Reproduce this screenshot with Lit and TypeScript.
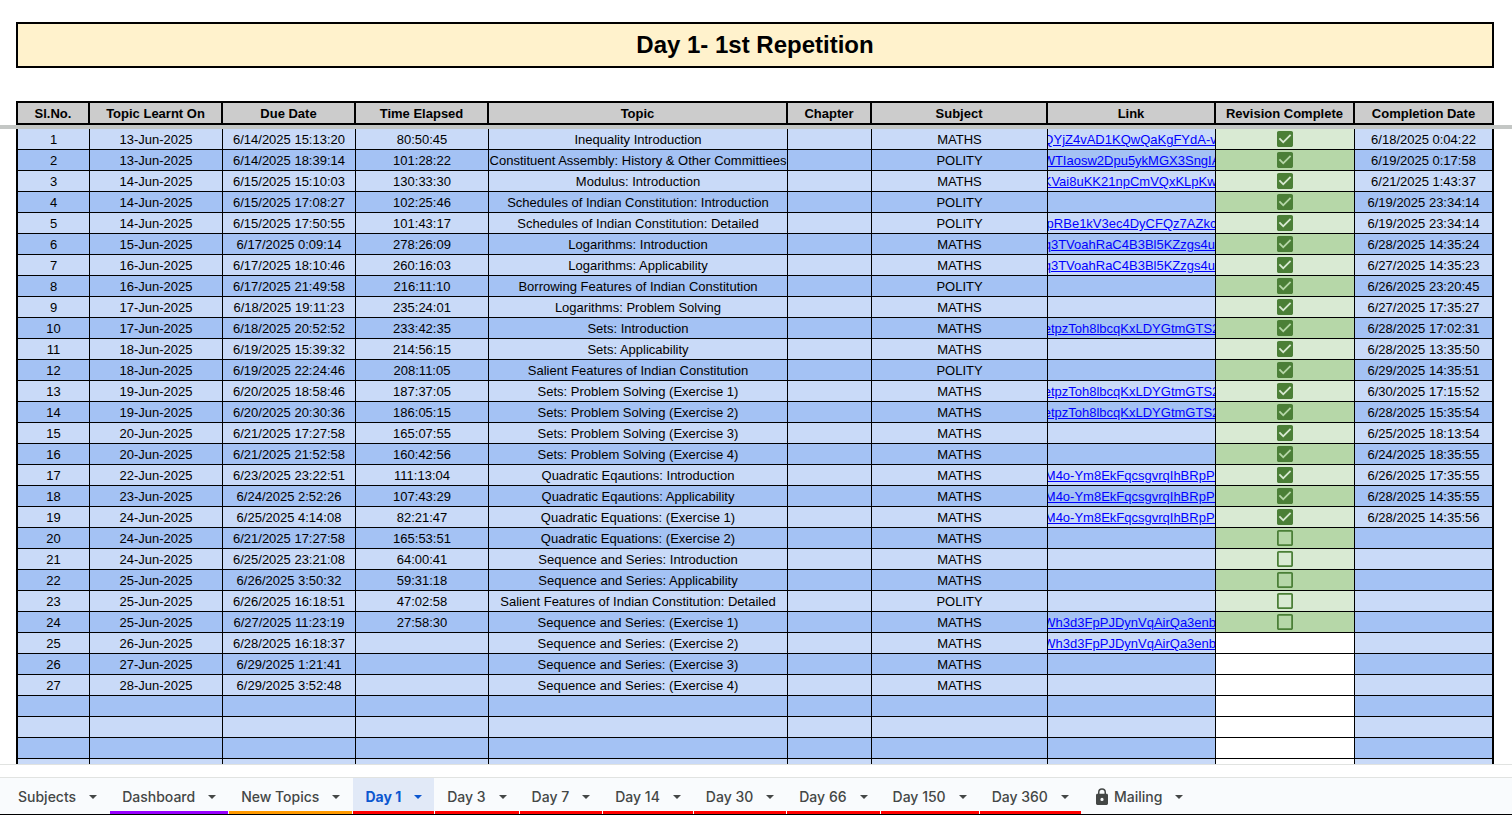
import { LitElement, html, css, nothing } from "lit";
import { customElement, state } from "lit/decorators.js";
import { classMap } from "lit/directives/class-map.js";

interface Row {
  learnt: string;
  due: string;
  elapsed: string;
  topic: string;
  subject: string;
  link: string;
  done: boolean | null;
  completed: string;
}

const COLUMNS: [string, number][] = [
  ["Sl.No.", 74],
  ["Topic Learnt On", 133],
  ["Due Date", 133],
  ["Time Elapsed", 133],
  ["Topic", 299],
  ["Chapter", 84],
  ["Subject", 176],
  ["Link", 168],
  ["Revision Complete", 139],
  ["Completion Date", 139],
];

const row = (
  learnt: string,
  due: string,
  elapsed: string,
  topic: string,
  subject: string,
  link: string,
  done: boolean | null,
  completed: string
): Row => ({ learnt: `${learnt}-Jun-2025`, due, elapsed, topic, subject, link, done, completed });

const LOG = "q3TVoahRaC4B3Bl5KZzgs4u-";
const SETS = "etpzToh8lbcqKxLDYGtmGTS2";
const QUAD = "M4o-Ym8EkFqcsgvrqIhBRpP\u00a0";
const SEQ = "Wh3d3FpPJDynVqAirQa3enbt";

const ROWS: Row[] = [
  row("13", "6/14/2025 15:13:20", "80:50:45", "Inequality Introduction", "MATHS", "QYjZ4vAD1KQwQaKgFYdA-vi", true, "6/18/2025 0:04:22"),
  row("13", "6/14/2025 18:39:14", "101:28:22", "Constituent Assembly: History & Other Committiees", "POLITY", "WTIaosw2Dpu5ykMGX3SngIA", true, "6/19/2025 0:17:58"),
  row("14", "6/15/2025 15:10:03", "130:33:30", "Modulus: Introduction", "MATHS", "KVai8uKK21npCmVQxKLpKw\u00a0", true, "6/21/2025 1:43:37"),
  row("14", "6/15/2025 17:08:27", "102:25:46", "Schedules of Indian Constitution: Introduction", "POLITY", "", true, "6/19/2025 23:34:14"),
  row("14", "6/15/2025 17:50:55", "101:43:17", "Schedules of Indian Constitution: Detailed", "POLITY", "pRBe1kV3ec4DyCFQz7AZkc", true, "6/19/2025 23:34:14"),
  row("15", "6/17/2025 0:09:14", "278:26:09", "Logarithms: Introduction", "MATHS", LOG, true, "6/28/2025 14:35:24"),
  row("16", "6/17/2025 18:10:46", "260:16:03", "Logarithms: Applicability", "MATHS", LOG, true, "6/27/2025 14:35:23"),
  row("16", "6/17/2025 21:49:58", "216:11:10", "Borrowing Features of Indian Constitution", "POLITY", "", true, "6/26/2025 23:20:45"),
  row("17", "6/18/2025 19:11:23", "235:24:01", "Logarithms: Problem Solving", "MATHS", "", true, "6/27/2025 17:35:27"),
  row("17", "6/18/2025 20:52:52", "233:42:35", "Sets: Introduction", "MATHS", SETS, true, "6/28/2025 17:02:31"),
  row("18", "6/19/2025 15:39:32", "214:56:15", "Sets: Applicability", "MATHS", "", true, "6/28/2025 13:35:50"),
  row("18", "6/19/2025 22:24:46", "208:11:05", "Salient Features of Indian Constitution", "POLITY", "", true, "6/29/2025 14:35:51"),
  row("19", "6/20/2025 18:58:46", "187:37:05", "Sets: Problem Solving (Exercise 1)", "MATHS", SETS, true, "6/30/2025 17:15:52"),
  row("19", "6/20/2025 20:30:36", "186:05:15", "Sets: Problem Solving (Exercise 2)", "MATHS", SETS, true, "6/28/2025 15:35:54"),
  row("20", "6/21/2025 17:27:58", "165:07:55", "Sets: Problem Solving (Exercise 3)", "MATHS", "", true, "6/25/2025 18:13:54"),
  row("20", "6/21/2025 21:52:58", "160:42:56", "Sets: Problem Solving (Exercise 4)", "MATHS", "", true, "6/24/2025 18:35:55"),
  row("22", "6/23/2025 23:22:51", "111:13:04", "Quadratic Eqautions: Introduction", "MATHS", QUAD, true, "6/26/2025 17:35:55"),
  row("23", "6/24/2025 2:52:26", "107:43:29", "Quadratic Eqautions: Applicability", "MATHS", QUAD, true, "6/28/2025 14:35:55"),
  row("24", "6/25/2025 4:14:08", "82:21:47", "Quadratic Equations: (Exercise 1)", "MATHS", QUAD, true, "6/28/2025 14:35:56"),
  row("24", "6/21/2025 17:27:58", "165:53:51", "Quadratic Equations: (Exercise 2)", "MATHS", "", false, ""),
  row("24", "6/25/2025 23:21:08", "64:00:41", "Sequence and Series: Introduction", "MATHS", "", false, ""),
  row("25", "6/26/2025 3:50:32", "59:31:18", "Sequence and Series: Applicability", "MATHS", "", false, ""),
  row("25", "6/26/2025 16:18:51", "47:02:58", "Salient Features of Indian Constitution: Detailed", "POLITY", "", false, ""),
  row("25", "6/27/2025 11:23:19", "27:58:30", "Sequence and Series: (Exercise 1)", "MATHS", SEQ, false, ""),
  row("26", "6/28/2025 16:18:37", "", "Sequence and Series: (Exercise 2)", "MATHS", SEQ, null, ""),
  row("27", "6/29/2025 1:21:41", "", "Sequence and Series: (Exercise 3)", "MATHS", "", null, ""),
  row("28", "6/29/2025 3:52:48", "", "Sequence and Series: (Exercise 4)", "MATHS", "", null, ""),
];

const BLANK_ROWS = [0, 1, 2, 3];

interface Tab {
  name: string;
  tint: string;
  locked?: boolean;
}

const TABS: Tab[] = [
  { name: "Subjects", tint: "none" },
  { name: "Dashboard", tint: "purple" },
  { name: "New Topics", tint: "orange" },
  { name: "Day 1", tint: "red" },
  { name: "Day 3", tint: "red" },
  { name: "Day 7", tint: "red" },
  { name: "Day 14", tint: "red" },
  { name: "Day 30", tint: "red" },
  { name: "Day 66", tint: "red" },
  { name: "Day 150", tint: "red" },
  { name: "Day 360", tint: "red" },
  { name: "Mailing", tint: "none", locked: true },
];

@customElement("sheet-grid")
export class SheetGrid extends LitElement {
  static styles = css`
    :host {
      display: block;
      padding: 22px 18px 0 16px;
      overflow: hidden;
      background: #fff;
      color: #000;
      font-family: "Liberation Sans", Arial, sans-serif;
      font-size: 13px;
    }
    .title {
      margin: 0 0 33px;
      padding: 7px 0;
      border: 2px solid #000;
      background: #fff2cc;
      font-size: 24px;
      line-height: 28px;
      font-weight: 700;
      text-align: center;
    }
    .grid {
      width: 100%;
      table-layout: fixed;
      border-collapse: separate;
      border-spacing: 0;
    }
    .head {
      padding: 2px 0 0;
      border: solid #000;
      border-width: 2px 2px 2px 0;
      background: #ccc;
      line-height: 18px;
      font-weight: 700;
      white-space: nowrap;
    }
    .head:first-child {
      border-left-width: 2px;
    }
    .freeze {
      height: 4px;
      padding: 0;
      background: #c4c7c5;
      box-shadow: -18px 0 #c4c7c5, 18px 0 #c4c7c5;
    }
    .line {
      --fill: #c9daf8;
      --tick-fill: #d9ead3;
    }
    .line.even {
      --fill: #a4c2f4;
      --tick-fill: #b6d7a8;
    }
    .cell {
      height: 20px;
      padding: 0;
      border: solid #000;
      border-width: 0 1px 1px 0;
      background: var(--fill);
    }
    .cell:first-child {
      border-left-width: 2px;
    }
    .cell:last-child {
      border-right-width: 2px;
    }
    .clip {
      display: flex;
      justify-content: center;
      height: 20px;
      overflow: hidden;
      line-height: 22px;
      white-space: nowrap;
    }
    .clip.low {
      align-items: center;
    }
    .link {
      flex: none;
      color: #00f;
      text-decoration: underline;
    }
    .ticked {
      background: var(--tick-fill);
    }
    .unset {
      background: #fff;
    }
    .tick {
      appearance: none;
      width: 16px;
      height: 16px;
      margin: 0;
      background: #4b7f37;
      -webkit-mask: url("data:image/svg+xml,%3Csvg xmlns='http://www.w3.org/2000/svg' viewBox='3 3 18 18'%3E%3Cpath d='M19 5v14H5V5h14m0-2H5c-1.1 0-2 .9-2 2v14c0 1.1.9 2 2 2h14c1.1 0 2-.9 2-2V5c0-1.1-.9-2-2-2z'/%3E%3C/svg%3E") center / 16px 16px no-repeat;
    }
    .tick:checked {
      -webkit-mask-image: url("data:image/svg+xml,%3Csvg xmlns='http://www.w3.org/2000/svg' viewBox='3 3 18 18'%3E%3Cpath d='M19 3H5c-1.11 0-2 .9-2 2v14c0 1.1.89 2 2 2h14c1.11 0 2-.9 2-2V5c0-1.1-.89-2-2-2zm-9 14l-5-5 1.41-1.41L10 14.17l7.59-7.59L19 8l-9 9z'/%3E%3C/svg%3E");
    }
  `;

  private text(value: string | number) {
    return html`<td class="cell"><div class="clip">${value === "" ? nothing : html`<span>${value}</span>`}</div></td>`;
  }

  private renderRow(r: Row, i: number) {
    return html`<tr class=${classMap({ line: true, even: i % 2 === 1 })}>
      ${this.text(i + 1)} ${this.text(r.learnt)} ${this.text(r.due)} ${this.text(r.elapsed)}
      ${this.text(r.topic)} ${this.text("")} ${this.text(r.subject)}
      <td class="cell">
        <div class="clip">${r.link ? html`<a class="link" href="#">${r.link}</a>` : nothing}</div>
      </td>
      <td class="cell ${r.done === null ? "unset" : "ticked"}">
        <div class="clip low">
          ${r.done === null
            ? nothing
            : html`<input class="tick" type="checkbox" aria-label="Revision Complete" .checked=${r.done} />`}
        </div>
      </td>
      ${this.text(r.completed)}
    </tr>`;
  }

  private renderBlank(i: number) {
    return html`<tr class=${classMap({ line: true, even: i % 2 === 1 })}>
      ${COLUMNS.map((_, c) => html`<td class="cell ${c === 8 ? "unset" : ""}"></td>`)}
    </tr>`;
  }

  render() {
    return html`
      <h1 class="title">Day 1- 1st Repetition</h1>
      <table class="grid">
        <colgroup>
          ${COLUMNS.map(([, width]) => html`<col style="width:${width}px" />`)}
        </colgroup>
        <thead>
          <tr>
            ${COLUMNS.map(([name]) => html`<th class="head" scope="col">${name}</th>`)}
          </tr>
          <tr>
            <td class="freeze" colspan="10"></td>
          </tr>
        </thead>
        <tbody>
          ${ROWS.map((r, i) => this.renderRow(r, i))}
          ${BLANK_ROWS.map((i) => this.renderBlank(ROWS.length + i))}
        </tbody>
      </table>
    `;
  }
}

@customElement("sheet-tabs")
export class SheetTabs extends LitElement {
  static styles = css`
    :host {
      display: block;
      border-bottom: 1px solid #000;
      background: #f9fbfd;
      font-family: Inter, Roboto, sans-serif;
    }
    .tabs {
      display: flex;
      height: 36px;
      padding-left: 6px;
      border-top: 1px solid #e1e3e1;
      gap: 1px;
      overflow: hidden;
    }
    .tab {
      display: flex;
      align-items: center;
      flex: none;
      gap: 13px;
      margin: 0;
      padding: 4px 12px 0;
      border: 0;
      border-bottom: 3px solid transparent;
      background: none;
      color: #444746;
      font: 500 14px/20px Inter, Roboto, sans-serif;
      white-space: nowrap;
    }
    .purple {
      border-bottom-color: #90f;
    }
    .orange {
      border-bottom-color: #f90;
    }
    .red {
      border-bottom-color: #f00;
    }
    .current {
      background: #e1e9f7;
      color: #0b57d0;
      font-weight: 700;
    }
    .locked {
      padding-left: 14px;
    }
    .name {
      display: flex;
      align-items: center;
      gap: 6px;
    }
    .arrow {
      width: 8px;
      height: 4px;
      fill: currentColor;
    }
    .lock {
      width: 12px;
      height: 17px;
      fill: currentColor;
    }
  `;

  @state() private current = "Day 1";

  render() {
    return html`<nav class="tabs">
      ${TABS.map(
        (t) => html`<button
          type="button"
          class=${classMap({ tab: true, [t.tint]: true, current: t.name === this.current, locked: !!t.locked })}
          @click=${() => (this.current = t.name)}
        >
          <span class="name"
            >${t.locked
              ? html`<svg class="lock" viewBox="0 0 12 17" aria-hidden="true">
                  <path
                    fill-rule="evenodd"
                    d="M10.6 5.8H10V4.2a4 4 0 0 0-8 0v1.6h-.6C.6 5.8 0 6.4 0 7.2v8.4C0 16.4.6 17 1.4 17h9.2c.8 0 1.4-.6 1.4-1.4V7.2c0-.8-.6-1.4-1.4-1.4zM3.5 4.2a2.500 2.500 0 0 1 5 0v1.600h-5zM6 13a1.600 1.600 0 1 1 0-3.200A1.600 1.600 0 0 1 6 13z"
                  />
                </svg>`
              : nothing}${t.name}</span
          >
          <svg class="arrow" viewBox="0 0 8 4" aria-hidden="true"><path d="M0 0h8L4 4z" /></svg>
        </button>`
      )}
    </nav>`;
  }
}

@customElement("app-root")
export class AppRoot extends LitElement {
  static styles = css`
    :host {
      display: flex;
      flex-direction: column;
      height: 100vh;
      background: #fff;
    }
    .sheet {
      flex: 1;
      min-height: 0;
    }
    .track {
      flex: none;
      height: 12px;
      border-top: 1px solid #e1e3e1;
    }
    .bar {
      flex: none;
    }
  `;

  render() {
    return html`
      <sheet-grid class="sheet"></sheet-grid>
      <div class="track"></div>
      <sheet-tabs class="bar"></sheet-tabs>
    `;
  }
}
